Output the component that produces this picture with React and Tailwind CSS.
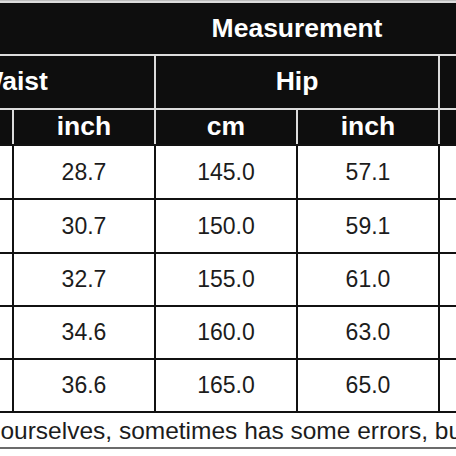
const waist = [
  ['73.0', '28.7'],
  ['78.0', '30.7'],
  ['83.0', '32.7'],
  ['88.0', '34.6'],
  ['93.0', '36.6'],
];
const hip = [
  ['145.0', '57.1'],
  ['150.0', '59.1'],
  ['155.0', '61.0'],
  ['160.0', '63.0'],
  ['165.0', '65.0'],
];
const length = [
  ['98.0', '38.6'],
  ['99.0', '39.0'],
  ['100.0', '39.4'],
  ['101.0', '39.8'],
  ['102.0', '40.2'],
];
const rowHeights = ['h-[52px]', 'h-[52px]', 'h-[51px]', 'h-[51px]', 'h-[51px]'];

const App = () => {
  return (
    <div
      className="w-[456px] h-[456px] overflow-hidden bg-white"
      style={{ fontFamily: '"Liberation Sans", Arial, sans-serif' }}
    >
      <div className="ml-[-128px] w-[850px]">
        <div className="grid grid-cols-[repeat(6,140px)] gap-[2px] bg-[#dcdcdc] pt-[2px] border-t border-[#bdbdbd] text-white font-bold text-[26.5px]">
          <div className="col-span-6 h-[51px] bg-[#0e0e0e] flex items-center justify-center">
            Measurement
          </div>
          <div className="col-span-2 h-[52px] bg-[#0e0e0e] flex items-center justify-center">Waist</div>
          <div className="col-span-2 h-[52px] bg-[#0e0e0e] flex items-center justify-center">Hip</div>
          <div className="col-span-2 h-[52px] bg-[#0e0e0e] flex items-center justify-center">Length</div>
          {['cm', 'inch', 'cm', 'inch', 'cm', 'inch'].map((u, i) => (
            <div key={i} className="h-[34px] bg-[#0e0e0e] flex items-center justify-center">
              {u}
            </div>
          ))}
        </div>
        <div className="grid grid-cols-[repeat(6,140px)] gap-[2px] bg-[#111] py-[2px] text-[23px] text-[#1c1c1c]">
          {waist.map((w, r) =>
            [...w, ...hip[r], ...length[r]].map((v, c) => (
              <div key={`${r}-${c}`} className={`${rowHeights[r]} bg-white flex items-center justify-center`}>
                {v}
              </div>
            ))
          )}
        </div>
      </div>
      <div className="h-[36px] border-b-2 border-[#6b6b6b] whitespace-nowrap overflow-hidden text-[24.5px] leading-[36px] text-[#1c1c1c]">
        <span className="ml-[-148px]">
          Measured by ourselves, sometimes has some errors, but the error will not exceed 1-3cm.
        </span>
      </div>
    </div>
  );
};

export default App;
